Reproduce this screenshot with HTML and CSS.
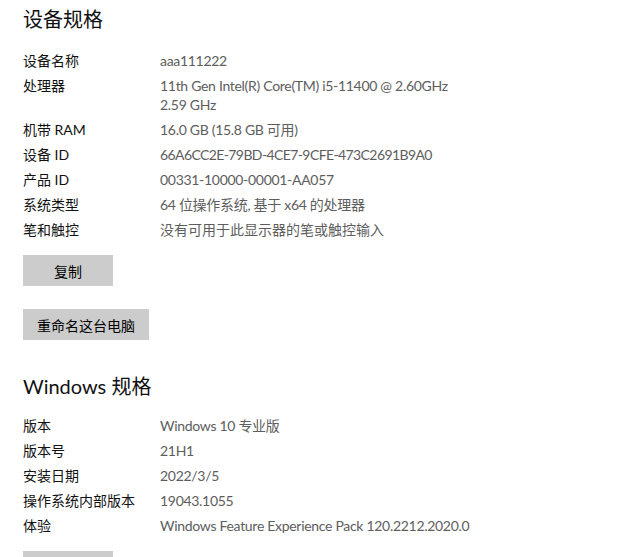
FILE: index.html
```html
<!DOCTYPE html>
<html lang="zh-CN">
<head>
    <meta charset="UTF-8">
    <meta name="viewport" content="width=device-width, initial-scale=1.0">
    <title>关于</title>
    <link rel="stylesheet" href="styles.css">
</head>
<body>
    <div class="page">
        <h2 class="section-title">设备规格</h2>
        <dl class="specs">
            <dt>设备名称</dt>
            <dd>aaa111222</dd>
            <dt>处理器</dt>
            <dd>11th Gen Intel(R) Core(TM) i5-11400 @ 2.60GHz<br>2.59 GHz</dd>
            <dt>机带 RAM</dt>
            <dd>16.0 GB (15.8 GB 可用)</dd>
            <dt>设备 ID</dt>
            <dd class="mono-ish">66A6CC2E-79BD-4CE7-9CFE-473C2691B9A0</dd>
            <dt>产品 ID</dt>
            <dd>00331-10000-00001-AA057</dd>
            <dt>系统类型</dt>
            <dd>64 位操作系统, 基于 x64 的处理器</dd>
            <dt>笔和触控</dt>
            <dd class="cjk">没有可用于此显示器的笔或触控输入</dd>
        </dl>

        <div class="actions">
            <button class="btn btn-copy">复制</button>
            <button class="btn">重命名这台电脑</button>
        </div>

        <h2 class="section-title section-title--second">Windows 规格</h2>
        <dl class="specs">
            <dt>版本</dt>
            <dd>Windows 10 专业版</dd>
            <dt>版本号</dt>
            <dd>21H1</dd>
            <dt>安装日期</dt>
            <dd>2022/3/5</dd>
            <dt>操作系统内部版本</dt>
            <dd>19043.1055</dd>
            <dt>体验</dt>
            <dd>Windows Feature Experience Pack 120.2212.2020.0</dd>
        </dl>

        <div class="actions">
            <button class="btn btn-copy">复制</button>
        </div>
    </div>
</body>
</html>
```

FILE: styles.css
```css
:root {
    --label-color: #111;
    --value-color: #5d5d5d;
    --button-bg: #cccccc;
}

body {
    margin: 0;
    background-color: #fff;
    font-family: Lato, "Noto Sans CJK SC", sans-serif;
    font-size: 14px;
    color: var(--label-color);
    overflow: hidden;
}

.page {
    padding: 5px 23px 0;
}

.section-title {
    margin: 0 0 18px;
    font-size: 20px;
    font-weight: normal;
    line-height: 28px;
    color: #111;
}

.section-title--second {
    margin-top: 32px;
    margin-bottom: 16px;
}

.specs {
    display: grid;
    grid-template-columns: 137px auto;
    row-gap: 6px;
    margin: 0;
    line-height: 19px;
}

.specs dt {
    color: var(--label-color);
}

.specs dd {
    margin: 0;
    color: var(--value-color);
    letter-spacing: -0.3px;
}

/* uppercase hex runs wide in Lato */
.specs dd.mono-ish {
    letter-spacing: -0.6px;
}

.specs dd.cjk {
    letter-spacing: 0;
}

.actions {
    display: flex;
    flex-direction: column;
    align-items: flex-start;
    gap: 23px;
    margin-top: 16px;
}

.btn {
    height: 31px;
    min-width: 90px;
    padding: 0 14px;
    border: none;
    background-color: var(--button-bg);
    font-family: inherit;
    font-size: 14px;
    color: #000;
    cursor: pointer;
}
```
